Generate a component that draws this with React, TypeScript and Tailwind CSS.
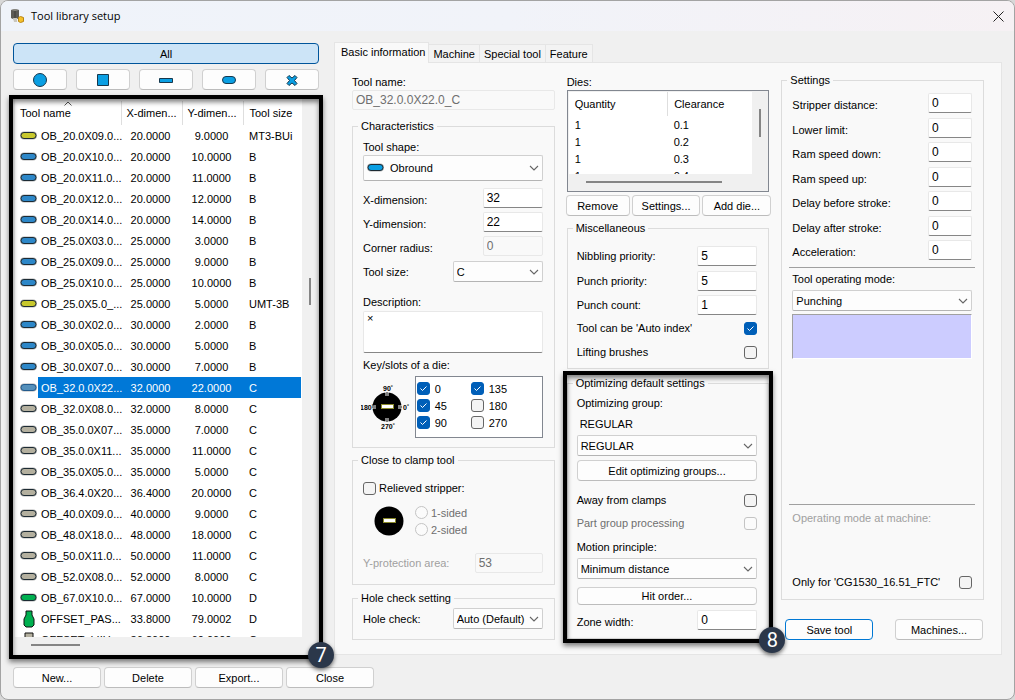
import type { ReactNode } from "react";

type Row = [name: string, x: string, y: string, size: string, kind: string];

const tools: Row[] = [
  ["OB_20.0X09.0...", "20.0000", "9.0000", "MT3-BUi", "yellow"],
  ["OB_20.0X10.0...", "20.0000", "10.0000", "B", "blue"],
  ["OB_20.0X11.0...", "20.0000", "11.0000", "B", "blue"],
  ["OB_20.0X12.0...", "20.0000", "12.0000", "B", "blue"],
  ["OB_20.0X14.0...", "20.0000", "14.0000", "B", "blue"],
  ["OB_25.0X03.0...", "25.0000", "3.0000", "B", "blue"],
  ["OB_25.0X09.0...", "25.0000", "9.0000", "B", "blue"],
  ["OB_25.0X10.0...", "25.0000", "10.0000", "B", "blue"],
  ["OB_25.0X5.0_...", "25.0000", "5.0000", "UMT-3B", "yellow"],
  ["OB_30.0X02.0...", "30.0000", "2.0000", "B", "blue"],
  ["OB_30.0X05.0...", "30.0000", "5.0000", "B", "blue"],
  ["OB_30.0X07.0...", "30.0000", "7.0000", "B", "blue"],
  ["OB_32.0.0X22...", "32.0000", "22.0000", "C", "selected"],
  ["OB_32.0X08.0...", "32.0000", "8.0000", "C", "gray"],
  ["OB_35.0.0X07...", "35.0000", "7.0000", "C", "gray"],
  ["OB_35.0.0X11...", "35.0000", "11.0000", "C", "gray"],
  ["OB_35.0X05.0...", "35.0000", "5.0000", "C", "gray"],
  ["OB_36.4.0X20...", "36.4000", "20.0000", "C", "gray"],
  ["OB_40.0X09.0...", "40.0000", "9.0000", "C", "gray"],
  ["OB_48.0X18.0...", "48.0000", "18.0000", "C", "gray"],
  ["OB_50.0X11.0...", "50.0000", "11.0000", "C", "gray"],
  ["OB_52.0X08.0...", "52.0000", "8.0000", "C", "gray"],
  ["OB_67.0X10.0...", "67.0000", "10.0000", "D", "green"],
  ["OFFSET_PAS...", "33.8000", "79.0002", "D", "bottle"],
  ["OFFSET_LIIU...", "36.8000", "60.0000", "C", "box"],
];

const fills: Record<string, string> = {
  yellow: "#c8c82d",
  blue: "#2d87c8",
  selected: "#5590bb",
  gray: "#b4b09f",
  green: "#00b050",
  cyan: "#0a9fe3",
};

function ToolIcon({ kind }: { kind: string }) {
  if (kind === "bottle")
    return (
      <svg width="17" height="18" viewBox="0 0 17 18" className="shrink-0">
        <path d="M6 1h6v4l2 4v6l-2 2H6l-2-2V9l2-4z" fill="#00b050" stroke="#111" />
      </svg>
    );
  if (kind === "box")
    return (
      <svg width="17" height="18" viewBox="0 0 17 18" className="shrink-0">
        <path d="M5 2h8v15H5z" fill="#b4b09f" stroke="#111" />
      </svg>
    );
  return (
    <svg width="17" height="10" viewBox="0 0 17 10" className="shrink-0">
      <rect x="0" y="0.500" width="17" height="8" rx="4" fill="#000" opacity=".3" />
      <rect x="1" y="1.500" width="15" height="6" rx="3" fill={fills[kind]} stroke={kind === "selected" ? "#235a8c" : "#1c2a33"} />
    </svg>
  );
}

function Button({ children, className = "" }: { children: ReactNode; className?: string }) {
  return (
    <button type="button" className={`flex h-[21px] items-center justify-center rounded border border-[#d0d0d0] border-b-[#bcbcbc] bg-[#fdfdfd] ${className}`}>
      {children}
    </button>
  );
}

function Field({ id, value, className = "", disabled = false }: { id: string; value: string; className?: string; disabled?: boolean }) {
  return (
    <input
      id={id}
      defaultValue={value}
      disabled={disabled}
      className={`h-5 rounded-xs border border-[#e8e8e8] border-b-[#868686] bg-white px-[3px] text-[12px] disabled:border-b-[#e8e8e8] disabled:bg-[#f9f9f9] disabled:text-[#6f6f6f] ${className}`}
    />
  );
}

function Select({ id, value, className = "", tall = false }: { id: string; value: string; className?: string; tall?: boolean }) {
  return (
    <div className={`relative ${className}`}>
      <select
        id={id}
        className={`block w-full appearance-none rounded-xs border border-[#d0d0d0] border-b-[#b4b4b4] bg-[#fdfdfd] ${tall ? "h-[26px] pl-[26px]" : "h-[21px] pl-[3px]"}`}
      >
        <option>{value}</option>
      </select>
      {tall && (
        <span className="pointer-events-none absolute top-2 left-1">
          <ToolIcon kind="cyan" />
        </span>
      )}
      <svg width="10" height="6" viewBox="0 0 10 6" className="pointer-events-none absolute top-1/2 right-1 -translate-y-1/2">
        <path d="M1 1l4 4 4-4" fill="none" stroke="#666" strokeWidth="1.1" />
      </svg>
    </div>
  );
}

function Check({ id, checked = false, disabled = false }: { id: string; checked?: boolean; disabled?: boolean }) {
  return (
    <span className="relative block size-[13px] shrink-0">
      <input
        id={id}
        type="checkbox"
        defaultChecked={checked}
        disabled={disabled}
        className="peer block size-[13px] appearance-none rounded-[3px] border border-[#666] bg-[#f4f4f4] checked:border-[#005fb8] checked:bg-[#005fb8] disabled:border-[#c4c4c4] disabled:bg-[#fbfbfb]"
      />
      <svg width="13" height="13" viewBox="0 0 13 13" className="pointer-events-none absolute inset-0 hidden peer-checked:block">
        <path d="M3.5 6.5l2 2 4-4" fill="none" stroke="#fff" />
      </svg>
    </span>
  );
}

function Group({ title, children, className = "" }: { title: string; children: ReactNode; className?: string }) {
  return (
    <fieldset className={`min-w-0 border border-[#dcdcdc] ${className}`}>
      <legend className="ml-[5px] px-[3px]">{title}</legend>
      {children}
    </fieldset>
  );
}

function Marker({ n, className }: { n: number; className: string }) {
  return (
    <>
      <div className="pointer-events-none absolute -top-1 -right-1 -bottom-1 -left-1 border-4 border-black shadow-[0_3px_5px_rgba(0,0,0,0.5),inset_0_3px_5px_rgba(0,0,0,0.5)]" />
      <div className={`absolute z-10 flex size-[26px] items-center justify-center rounded-full bg-[#2b374a] font-[Roboto] text-xl text-white shadow-[0_2px_4px_rgba(0,0,0,0.6)] ${className}`}>
        {n}
      </div>
    </>
  );
}

function DieDial({ labels = false }: { labels?: boolean }) {
  return (
    <svg width="52" height="52" viewBox="0 0 52 52" className="shrink-0">
      <circle cx="26" cy="26" r="14.5" fill="#000" />
      <rect x="20.500" y="23.500" width="12" height="4" fill="#fff" stroke="#8a8a2a" />
      {labels && (
        <>
          <path d="M26 11v4M26 37v4M11 26h4M37 26h4" stroke="#fff" strokeWidth="3" />
          <path d="M26 11v4M26 37v4M11 26h4M37 26h4" stroke="#000" />
          <g fontSize="7" fontWeight="bold" fontFamily="Liberation Sans" fill="#000">
            <text x="22" y="10">90˚</text>
            <text x="-1" y="29">180˚</text>
            <text x="42" y="29">0˚</text>
            <text x="20" y="48">270˚</text>
          </g>
        </>
      )}
    </svg>
  );
}

function ToolList() {
  return (
    <div className="relative mt-[9px] bg-[#f0f0f0] pl-[2px]">
      <div className="grid grid-cols-[1fr_17px]">
        <div className="h-[538px] overflow-hidden bg-white pt-[2px] pr-px">
          <table className="w-full table-fixed border-collapse text-left">
            <colgroup>
              <col className="w-[106px]" />
              <col className="w-[61px]" />
              <col className="w-[61px]" />
              <col />
            </colgroup>
            <thead>
              <tr className="h-6">
                <th className="relative border-r border-[#dedede] pl-[5px] font-normal">
                  Tool name
                  <svg width="8" height="5" viewBox="0 0 8 5" className="absolute top-0 left-[49px]">
                    <path d="M.5 4.5L4 1l3.500 3.500" fill="none" stroke="#555" />
                  </svg>
                </th>
                <th className="border-r border-[#dedede] pl-[5px] font-normal">X-dimen...</th>
                <th className="border-r border-[#dedede] pl-[5px] font-normal">Y-dimen...</th>
                <th className="pl-[6px] font-normal">Tool size</th>
              </tr>
            </thead>
            <tbody>
              {tools.map(([name, x, y, size, kind]) => {
                const cell = kind === "selected" ? "bg-[#0078d7] text-white" : "";
                return (
                  <tr key={name} className="h-[21px]">
                    <td className="p-0">
                      <div className="flex items-center gap-px pl-[5px]">
                        <ToolIcon kind={kind} />
                        <span className={`h-[21px] flex-1 pl-[3px] leading-[22px] whitespace-nowrap ${cell}`}>{name}</span>
                      </div>
                    </td>
                    <td className={`p-0 pr-[2px] text-center ${cell}`}>{x}</td>
                    <td className={`p-0 pr-[2px] text-center ${cell}`}>{y}</td>
                    <td className={`p-0 pl-[6px] ${cell}`}>{size}</td>
                  </tr>
                );
              })}
            </tbody>
          </table>
        </div>
        <div className="pt-[179px] pl-[7px]">
          <div className="h-[27px] w-0.5 bg-[#858585]" />
        </div>
      </div>
      <div className="h-[18px] pt-[7px] pl-4">
        <div className="h-0.5 w-[49px] bg-[#858585]" />
      </div>
      <Marker n={7} className="-right-[15px] -bottom-[13px]" />
    </div>
  );
}

const shapes = [
  { name: "Round", art: <circle cx="10" cy="7" r="6.500" /> },
  { name: "Square", art: <path d="M4.500 1.500h11v11h-11z" /> },
  { name: "Rectangle", art: <path d="M3.500 5.500h13v4h-13z" /> },
  { name: "Obround", art: <rect x="3.500" y="3.500" width="13" height="7" rx="3.500" /> },
  { name: "Special", art: <path d="M7 2.500l3 2.500 3-2.500 2 2L12.500 7.500l2.500 3-2 2-3-2.500-3 2.500-2-2 2.500-3L5 4.500z" /> },
];

function LeftPane() {
  return (
    <section className="w-[306px] shrink-0 pt-px">
      <Button className="w-full border-[#00559b]! bg-[#cce4f7]!">All</Button>
      <div className="mt-[5px] grid grid-cols-5 gap-[9px]">
        {shapes.map((s) => (
          <Button key={s.name}>
            <svg width="20" height="14" viewBox="0 0 20 14" fill="#0a9fe3" stroke="#17384d" aria-label={s.name}>
              {s.art}
            </svg>
          </Button>
        ))}
      </div>
      <ToolList />
    </section>
  );
}

function Characteristics() {
  return (
    <Group title="Characteristics" className="mt-2">
      <div className="pt-[5px] pr-[11px] pb-[9px] pl-[10px]">
        <label htmlFor="shape" className="block">Tool shape:</label>
        <Select id="shape" value="Obround" tall />
        <div className="mt-[7px] flex flex-col gap-1">
          <div className="flex items-end justify-between">
            <label htmlFor="xdim">X-dimension:</label>
            <Field id="xdim" value="32" className="w-[60px]" />
          </div>
          <div className="flex items-end justify-between">
            <label htmlFor="ydim">Y-dimension:</label>
            <Field id="ydim" value="22" className="w-[60px]" />
          </div>
          <div className="flex items-end justify-between">
            <label htmlFor="radius">Corner radius:</label>
            <Field id="radius" value="0" disabled className="w-[60px]" />
          </div>
        </div>
        <div className="mt-[5px] flex items-center justify-between">
          <label htmlFor="size">Tool size:</label>
          <Select id="size" value="C" className="w-[90px]" />
        </div>
        <label htmlFor="desc" className="mt-3 block">Description:</label>
        <textarea
          id="desc"
          defaultValue="×"
          className="mt-px block h-[42px] w-full resize-none rounded-xs border border-[#e8e8e8] border-b-[#868686] bg-white px-[3px] leading-3"
        />
        <p className="mt-1">Key/slots of a die:</p>
        <div className="mt-[3px] flex items-center justify-between">
          <div className="-ml-[2px]">
            <DieDial labels />
          </div>
          <div className="grid h-[62px] w-[128px] auto-rows-[17px] grid-cols-[54px_1fr] border border-[#828790] bg-white pt-[3px] pl-px">
            {["0", "135", "45", "180", "90", "270"].map((a) => (
              <div key={a} className="flex items-center gap-[5px]">
                <Check id={`key-${a}`} checked={a !== "180" && a !== "270"} />
                <label htmlFor={`key-${a}`}>{a}</label>
              </div>
            ))}
          </div>
        </div>
      </div>
    </Group>
  );
}

function BasicColumn() {
  return (
    <div className="pt-0.5">
      <label htmlFor="name" className="block">Tool name:</label>
      <Field id="name" value="OB_32.0.0X22.0_C" disabled className="block w-full" />
      <Characteristics />
      <Group title="Close to clamp tool" className="mt-1">
        <div className="pt-3 pr-[11px] pb-[11px] pl-[10px]">
          <div className="flex items-center gap-[3px]">
            <Check id="relieved" />
            <label htmlFor="relieved">Relieved stripper:</label>
          </div>
          <div className="mt-2 flex h-[34px] items-center">
            <DieDial />
            <div className="text-[#6f6f6f]">
              {["1-sided", "2-sided"].map((s) => (
                <div key={s} className="flex h-[17px] items-center gap-[3px]">
                  <input id={s} type="radio" name="sided" disabled className="size-[13px] appearance-none rounded-full border border-[#c4c4c4] bg-[#fbfbfb]" />
                  <label htmlFor={s}>{s}</label>
                </div>
              ))}
            </div>
          </div>
          <div className="mt-[15px] flex items-center justify-between">
            <label htmlFor="yprot" className="text-[#a0a0a0]">Y-protection area:</label>
            <Field id="yprot" value="53" disabled className="w-[68px]" />
          </div>
        </div>
      </Group>
      <Group title="Hole check setting" className="mt-[5px]">
        <div className="flex items-center justify-between pt-0.5 pr-[11px] pb-[10px] pl-[10px]">
          <label htmlFor="hole">Hole check:</label>
          <Select id="hole" value="Auto (Default)" className="w-[90px]" />
        </div>
      </Group>
    </div>
  );
}

function Dies() {
  return (
    <>
      <p>Dies:</p>
      <div className="h-[102px] border border-[#828790] bg-[#f0f0f0] p-px">
        <div className="grid grid-cols-[1fr_15px]">
          <div className="h-[82px] overflow-hidden bg-white">
            <table className="w-full table-fixed border-collapse text-left">
              <thead>
                <tr className="h-6">
                  <th className="w-[99px] border-r border-[#dedede] pl-[6px] font-normal">Quantity</th>
                  <th className="pl-[6px] font-normal">Clearance</th>
                </tr>
              </thead>
              <tbody>
                {["0.1", "0.2", "0.3", "0.4"].map((c) => (
                  <tr key={c} className="h-[17px]">
                    <td className="p-0 pl-[6px]">1</td>
                    <td className="p-0 pl-[6px]">{c}</td>
                  </tr>
                ))}
              </tbody>
            </table>
          </div>
          <div className="pt-[17px] pl-[7px]">
            <div className="h-7 w-0.5 bg-[#858585]" />
          </div>
        </div>
        <div className="pt-[7px] pl-[17px]">
          <div className="h-0.5 w-[136px] bg-[#858585]" />
        </div>
      </div>
      <div className="-mr-[2px] -ml-px mt-[3px] grid grid-cols-[64px_1fr_1fr] gap-0.5">
        <Button>Remove</Button>
        <Button>Settings...</Button>
        <Button>Add die...</Button>
      </div>
    </>
  );
}

function DiesColumn() {
  return (
    <div className="pt-0.5">
      <Dies />
      <Group title="Miscellaneous" className="mt-1">
        <div className="pt-[10px] pr-[11px] pb-2 pl-[9px]">
          <div className="flex h-[69px] flex-col justify-between">
            <div className="flex items-center justify-between">
              <label htmlFor="nibbling">Nibbling priority:</label>
              <Field id="nibbling" value="5" className="w-[60px]" />
            </div>
            <div className="flex items-center justify-between">
              <label htmlFor="priority">Punch priority:</label>
              <Field id="priority" value="5" className="w-[60px]" />
            </div>
            <div className="flex items-center justify-between">
              <label htmlFor="count">Punch count:</label>
              <Field id="count" value="1" className="w-[60px]" />
            </div>
          </div>
          <div className="mt-[5px] flex items-center justify-between">
            <label htmlFor="auto">Tool can be 'Auto index'</label>
            <Check id="auto" checked />
          </div>
          <div className="mt-2 flex items-center justify-between">
            <label htmlFor="brushes">Lifting brushes</label>
            <Check id="brushes" />
          </div>
        </div>
      </Group>
      <div className="relative mt-[6px]">
        <Group title="Optimizing default settings">
          <div className="pt-1 pr-[11px] pb-2 pl-[9px]">
            <label htmlFor="group" className="block">Optimizing group:</label>
            <p className="mt-[5px] pl-[3px]">REGULAR</p>
            <Select id="group" value="REGULAR" className="mt-[3px]" />
            <Button className="mt-1 w-full">Edit optimizing groups...</Button>
            <div className="mt-[11px] flex items-center justify-between">
              <label htmlFor="away">Away from clamps</label>
              <Check id="away" />
            </div>
            <div className="mt-[7px] flex items-center justify-between">
              <label htmlFor="part" className="text-[#6f6f6f]">Part group processing</label>
              <Check id="part" disabled />
            </div>
            <label htmlFor="motion" className="mt-2 block">Motion principle:</label>
            <Select id="motion" value="Minimum distance" className="mt-[3px]" />
            <Button className="mt-2 h-[18px]! w-full">Hit order...</Button>
            <div className="mt-[5px] flex items-end justify-between">
              <label htmlFor="zone">Zone width:</label>
              <Field id="zone" value="0" className="w-[60px]" />
            </div>
          </div>
        </Group>
        <Marker n={8} className="-right-[16px] -bottom-[14px]" />
      </div>
    </div>
  );
}

const settings = [
  "Stripper distance:",
  "Lower limit:",
  "Ram speed down:",
  "Ram speed up:",
  "Delay before stroke:",
  "Delay after stroke:",
  "Acceleration:",
];

function SettingsColumn() {
  return (
    <div>
      <Group title="Settings">
        <div className="pt-[5px] pr-[11px] pb-[9px] pl-[10px]">
          <div className="flex h-[167px] flex-col justify-between">
            {settings.map((s, i) => (
              <div key={s} className="flex items-end justify-between">
                <label htmlFor={`set-${i}`}>{s}</label>
                <Field id={`set-${i}`} value="0" className="w-11" />
              </div>
            ))}
          </div>
          <hr className="-mx-[3px] mt-[7px] border-[#a0a0a0]" />
          <label htmlFor="mode" className="mt-[3px] block">Tool operating mode:</label>
          <Select id="mode" value="Punching" className="mt-[3px]" />
          <div className="mt-[3px] h-[45px] border border-white border-t-[#a0a0a0] border-l-[#a0a0a0] bg-[#ccccff]" />
          <hr className="-mx-[3px] mt-[145px] border-[#a0a0a0]" />
          <p className="mt-[5px] text-[#a0a0a0]">Operating mode at machine:</p>
          <div className="mt-12 flex items-center justify-between">
            <label htmlFor="only">Only for 'CG1530_16.51_FTC'</label>
            <Check id="only" />
          </div>
        </div>
      </Group>
      <div className="mt-[19px] flex justify-between pr-px pl-1">
        <Button className="w-[88px] border-[#0078d4]!">Save tool</Button>
        <Button className="w-[88px]">Machines...</Button>
      </div>
    </div>
  );
}

function TitleBar() {
  return (
    <header className="flex h-[30px] items-center bg-linear-to-r from-[#eff3fa] via-[#f1f3f9] to-[#f6f1f4] pr-[10px] pl-[9px]">
      <svg width="15" height="16" viewBox="0 0 15 16">
        <path d="M1 2l4-1 4 1v8l-4 2-4-2z" fill="#5c5a55" />
        <path d="M1 2l4-1 4 1-4 1z" fill="#8c8a84" />
        <path d="M5 3v8" stroke="#3d3b38" />
        <path d="M3 10h4v4H4z" fill="#c9c6bd" />
        <path d="M8.500 9.500l2-1 3 1v4l-3 1-2-1z" fill="#f5c02a" stroke="#b98512" />
      </svg>
      <h1 className="ml-[6px] font-['Open_Sans'] text-[11px]">Tool library setup</h1>
      <button type="button" aria-label="Close window" className="ml-auto">
        <svg width="11" height="11" viewBox="0 0 11 11">
          <path d="M.5.5l10 10M10.500.5l-10 10" stroke="#222" />
        </svg>
      </button>
    </header>
  );
}

export default function App() {
  return (
    <div className="min-h-screen bg-[#d8d8d8] font-['Liberation_Sans',sans-serif] text-[11px] leading-4 text-black">
      <div className="flex min-h-screen flex-col overflow-hidden rounded-lg border border-[#a3a3a3] bg-[#f0f0f0]">
        <TitleBar />
        <main className="flex gap-[15px] px-3 pt-[11px]">
          <LeftPane />
          <section className="flex flex-1 flex-col">
            <div role="tablist" className="flex h-5 items-end">
              <button type="button" role="tab" aria-selected className="relative -mb-px h-[21px] border border-b-0 border-[#e5e5e5] bg-[#f9f9f9] pr-[3px] pb-[3px] pl-[6px]">
                Basic information
              </button>
              {["Machine", "Special tool", "Feature"].map((t) => (
                <button key={t} type="button" role="tab" className="h-[18px] border-t border-r border-[#e5e5e5] bg-[#f3f3f3] px-1 leading-4">
                  {t}
                </button>
              ))}
            </div>
            <div className="grid flex-1 grid-cols-3 gap-3 border border-[#e5e5e5] bg-[#f9f9f9] px-[17px] pt-[9px] pb-[14px]">
              <BasicColumn />
              <DiesColumn />
              <SettingsColumn />
            </div>
          </section>
        </main>
        <footer className="mt-3 flex gap-[3px] px-3 pb-[11px]">
          {["New...", "Delete", "Export...", "Close"].map((b) => (
            <Button key={b} className="w-[88px]">{b}</Button>
          ))}
        </footer>
      </div>
    </div>
  );
}
